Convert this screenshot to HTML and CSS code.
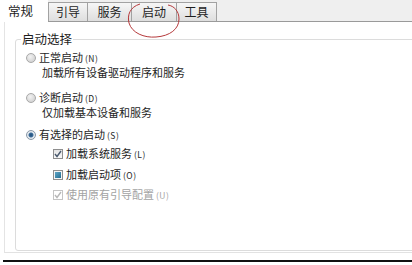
FILE: index.html
```html
<!DOCTYPE html>
<html lang="zh-CN">
<head>
    <meta charset="UTF-8">
    <title>系统配置</title>
    <link rel="stylesheet" href="styles.css">
</head>
<body>
    <div class="window">
        <div class="tabbar">
            <div class="tab tab-active">常规</div>
            <div class="tab tab-w40">引导</div>
            <div class="tab tab-w44">服务</div>
            <div class="tab tab-w45">启动</div>
            <div class="tab tab-w40">工具</div>
        </div>
        <svg class="circle-mark" width="60" height="42" viewBox="0 0 60 42">
            <path d="M14 3 C4 6 1 14 3 22 C6 32 18 37 30 36 C44 35 53 28 53 18 C53 10 48 5 42 4"
                  fill="none" stroke="#b5393b" stroke-width="1"/>
        </svg>
        <div class="panel">
            <fieldset class="group">
                <legend>启动选择</legend>

                <div class="line opt1">
                    <span class="radio"></span>
                    <span class="label">正常启动<span class="key">(N)</span></span>
                </div>
                <div class="line desc">加载所有设备驱动程序和服务</div>

                <div class="line opt2">
                    <span class="radio"></span>
                    <span class="label">诊断启动<span class="key">(D)</span></span>
                </div>
                <div class="line desc">仅加载基本设备和服务</div>

                <div class="line opt3">
                    <span class="radio radio-on"></span>
                    <span class="label">有选择的启动<span class="key">(S)</span></span>
                </div>

                <div class="line check cb1">
                    <span class="box box-checked">
                        <svg width="8" height="8" viewBox="0 0 8 8"><path d="M1 4 L3 6.5 L7 1" fill="none" stroke="#4a5a6e" stroke-width="1.4"/></svg>
                    </span>
                    <span class="label">加载系统服务<span class="key">(L)</span></span>
                </div>
                <div class="line check cb2">
                    <span class="box box-mixed"><span class="fill"></span></span>
                    <span class="label">加载启动项<span class="key">(O)</span></span>
                </div>
                <div class="line check cb3 disabled">
                    <span class="box box-disabled">
                        <svg width="8" height="8" viewBox="0 0 8 8"><path d="M1 4 L3 6.5 L7 1" fill="none" stroke="#b8b8b8" stroke-width="1.4"/></svg>
                    </span>
                    <span class="label">使用原有引导配置<span class="key">(U)</span></span>
                </div>
            </fieldset>
        </div>
        <div class="bottom-rule"></div>
    </div>
</body>
</html>
```

FILE: styles.css
```css
body {
    margin: 0;
    background: #ffffff;
    font-family: "Noto Sans CJK SC", "DejaVu Sans", sans-serif;
    color: #1e1e1e;
}

.window {
    position: relative;
    width: 412px;
    height: 265px;
    overflow: hidden;
}

.tabbar {
    display: flex;
    align-items: flex-end;
    height: 21px;
    background: #efefef;
    border-bottom: 1px solid #9a9a9a;
}

.tab {
    box-sizing: border-box;
    height: 19px;
    border: 1px solid #a2a2a2;
    border-bottom: none;
    border-left: none;
    background: linear-gradient(#f6f6f6, #dedede);
    font-size: 12px;
    line-height: 17px;
    text-align: center;
}

.tab-active {
    width: 48px;
    height: 22px;
    margin-bottom: -1px;
    background: #ffffff;
    border: none;
    text-align: left;
    padding-left: 8px;
    line-height: 22px;
    font-size: 12.5px;
}

.tab-w40 { width: 40px; }
.tab-w44 { width: 44px; }
.tab-w45 { width: 45px; }
.tab-w40:nth-child(2) { border-left: 1px solid #a2a2a2; }

.circle-mark {
    position: absolute;
    left: 126px;
    top: 1px;
}

.panel {
    box-sizing: border-box;
    height: 231px;
    margin-left: 4px;
    padding: 10px 0 0 10px;
    border-left: 1px solid #e4e4e4;
    border-bottom: 1px solid #e2e2e2;
}

.group {
    box-sizing: border-box;
    width: 420px;
    height: 219px;
    margin: 0;
    padding: 0 0 0 10px;
    border: 1px solid #dcdcdc;
    border-radius: 3px;
}

.group legend {
    margin-left: -5px;
    padding: 0 1px;
    font-size: 12.5px;
    line-height: 14px;
}

.line {
    display: flex;
    align-items: center;
    height: 15px;
    font-size: 11px;
    line-height: 15px;
}

.label {
    margin-left: 3px;
}

.key {
    font-size: 8.5px;
    margin-left: 2px;
    letter-spacing: 0.5px;
}

.desc {
    padding-left: 16px;
}

.opt1 { margin-top: 4px; }
.opt2 { margin-top: 10px; }
.opt3 { margin-top: 7px; }
.cb1 { margin-top: 4px; }
.cb2 { margin-top: 6px; }
.cb3 { margin-top: 5px; }

.check {
    padding-left: 27px;
}

.radio {
    box-sizing: border-box;
    width: 10px;
    height: 10px;
    border: 1px solid #a8a8a8;
    border-radius: 50%;
    background: radial-gradient(circle at 40% 35%, #f2f2f2, #c9c9c9);
}

.radio-on {
    background: radial-gradient(circle, #1f4f7d 0, #3d6c98 2px, #e9eef3 3px, #d2d8de 5px);
    border-color: #8a99a8;
}

.box {
    box-sizing: border-box;
    display: flex;
    align-items: center;
    justify-content: center;
    width: 10px;
    height: 10px;
    border: 1px solid #8e8e8e;
    background: linear-gradient(#e4e4e4, #fafafa);
}

.box-mixed {
    background: #f4f4f4;
}

.box-mixed .fill {
    width: 6px;
    height: 6px;
    background: linear-gradient(135deg, #5fa5c6, #236e92);
}

.box-disabled {
    border-color: #c4c4c4;
    background: #ffffff;
}

.disabled .label {
    color: #a3a3a3;
}

.bottom-rule {
    height: 2px;
    margin: 7px 0 0 3px;
    background: #111111;
}
```
